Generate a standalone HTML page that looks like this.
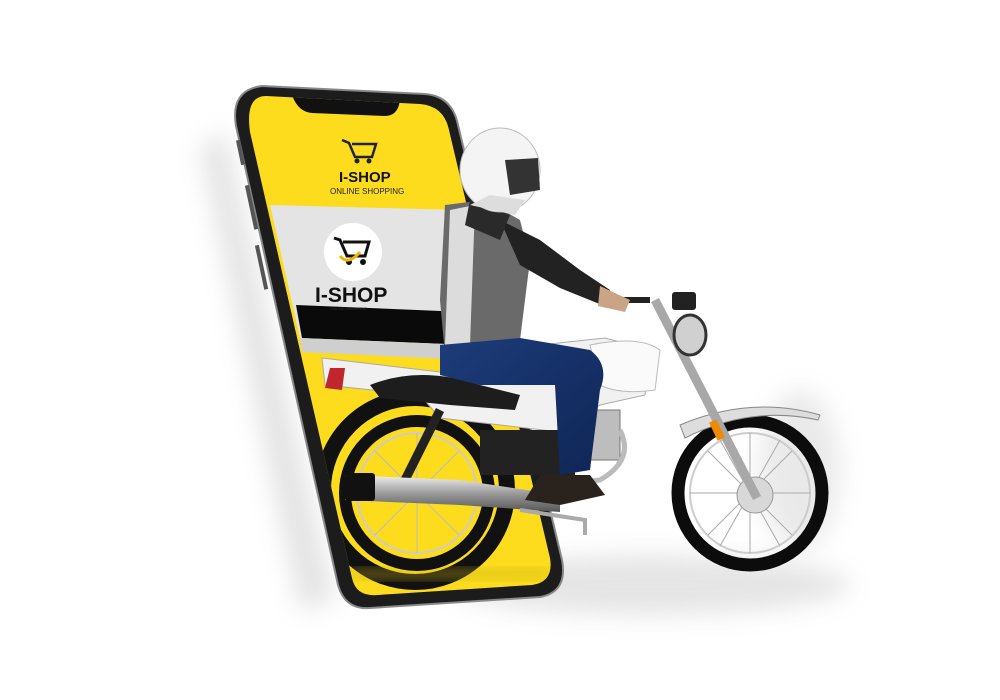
<!DOCTYPE html>
<html><head><meta charset="utf-8"><style>
html,body{margin:0;padding:0;background:#fff;width:1000px;height:700px;overflow:hidden}
svg{display:block}
text{font-family:"Liberation Sans",Arial,sans-serif}
</style></head><body>
<svg width="1000" height="700" viewBox="0 0 1000 700" xmlns="http://www.w3.org/2000/svg">
<defs>
<filter id="blur" x="-50%" y="-50%" width="200%" height="200%"><feGaussianBlur stdDeviation="12"/></filter>
<filter id="blur2" x="-50%" y="-50%" width="200%" height="200%"><feGaussianBlur stdDeviation="6"/></filter>
<linearGradient id="jeans" x1="0" y1="0" x2="1" y2="1"><stop offset="0" stop-color="#1d3c7a"/><stop offset="1" stop-color="#0f2656"/></linearGradient>
<linearGradient id="chrome" x1="0" y1="0" x2="0" y2="1"><stop offset="0" stop-color="#f2f2f2"/><stop offset=".5" stop-color="#9a9a9a"/><stop offset="1" stop-color="#555"/></linearGradient>
</defs>
<!-- shadows -->
<path d="M225 130 L335 600 L300 610 L200 150Z" fill="#bbb" opacity=".4" filter="url(#blur)"/>
<ellipse cx="650" cy="585" rx="200" ry="30" fill="#aaa" opacity=".3" filter="url(#blur)"/>
<ellipse cx="800" cy="470" rx="40" ry="80" fill="#aaa" opacity=".25" filter="url(#blur)"/>
<!-- phone body -->
<path d="M262 86 L425 94 Q452 96 458 125 L562 560 Q568 592 540 597 L370 608 Q345 610 338 585 L236 126 Q230 90 262 86 Z" fill="#1c1c1c" stroke="#888" stroke-width="2"/>
<rect x="238" y="140" width="4" height="25" fill="#555" transform="rotate(-12 240 150)"/>
<rect x="248" y="185" width="4" height="45" fill="#555" transform="rotate(-12 250 200)"/>
<rect x="258" y="245" width="4" height="45" fill="#555" transform="rotate(-12 260 260)"/>
<clipPath id="scr"><path d="M266 96 L420 104 Q444 106 449 130 L550 558 Q554 582 532 585 L378 595 Q356 597 352 578 L250 132 Q245 96 266 96 Z"/></clipPath>
<g clip-path="url(#scr)">
<rect x="230" y="90" width="340" height="520" fill="#fcdc1c"/>
<path d="M292 95 L400 100 Q398 116 385 116 L312 113 Q298 112 292 95Z" fill="#111"/>
<polygon points="270,205 460,210 470,345 300,338" fill="#e4e4e4"/>
<polygon points="296,305 465,312 470,345 302,338" fill="#0a0a0a"/>
<polygon points="300,338 470,345 470,360 302,352" fill="#cfcfcf"/>
<circle cx="353" cy="252" r="29" fill="#fff"/>
<path d="M334 238 l6 2 l7 16 h18 l4 -14 h-26" fill="none" stroke="#111" stroke-width="3"/>
<circle cx="349" cy="262" r="3" fill="#111"/><circle cx="363" cy="262" r="3" fill="#111"/>
<path d="M340 256 q8 10 20 -4" fill="none" stroke="#f0b400" stroke-width="3"/>
<text x="315" y="302" font-size="21" font-weight="bold" fill="#111">I-SHOP</text>
<text x="330" y="310" font-size="4" fill="#333">ONLINE SHOPPING</text>
<path d="M342 140 l7 3 l6 14 h17 l4 -13 h-24" fill="none" stroke="#222" stroke-width="2.5"/>
<circle cx="357" cy="161" r="2.5" fill="#222"/><circle cx="369" cy="161" r="2.5" fill="#222"/>
<text x="339" y="182" font-size="15" font-weight="bold" fill="#111">I-SHOP</text>
<text x="330" y="194" font-size="8" fill="#222">ONLINE SHOPPING</text>
<circle cx="415" cy="490" r="92" fill="none" stroke="#111" stroke-width="16"/>
<rect x="350" y="570" width="200" height="8" fill="#c9b012" opacity=".6" filter="url(#blur2)"/>
</g>
<!-- rear wheel -->
<circle cx="417" cy="493" r="72" fill="none" stroke="#111" stroke-width="12"/>
<circle cx="417" cy="493" r="60" fill="none" stroke="#ccc" stroke-width="2"/>
<g stroke="#bbb" stroke-width="1">
<line x1="417" y1="433" x2="417" y2="553"/><line x1="357" y1="493" x2="477" y2="493"/>
<line x1="375" y1="451" x2="459" y2="535"/><line x1="459" y1="451" x2="375" y2="535"/>
</g>
<!-- front wheel -->
<circle cx="750" cy="493" r="72" fill="none" stroke="#0c0c0c" stroke-width="13"/>
<circle cx="750" cy="493" r="60" fill="none" stroke="#ccc" stroke-width="2"/>
<g stroke="#aaa" stroke-width="1">
<line x1="750" y1="433" x2="750" y2="553"/><line x1="690" y1="493" x2="810" y2="493"/>
<line x1="708" y1="451" x2="792" y2="535"/><line x1="792" y1="451" x2="708" y2="535"/>
<line x1="720" y1="440" x2="780" y2="546"/><line x1="780" y1="440" x2="720" y2="546"/>
</g>
<circle cx="755" cy="495" r="18" fill="#d8d8d8" stroke="#999"/>
<path d="M680 425 Q750 395 820 415 L818 420 Q750 405 685 438 Z" fill="#ddd" stroke="#888"/>
<line x1="655" y1="300" x2="757" y2="498" stroke="#a8a8a8" stroke-width="9"/>
<rect x="713" y="420" width="8" height="20" fill="#f08a00" transform="rotate(-25 717 430)"/>
<ellipse cx="690" cy="335" rx="16" ry="20" fill="#d0d0d0" stroke="#333" stroke-width="3"/>
<rect x="672" y="292" width="24" height="18" fill="#222" rx="3"/>
<path d="M600 300 L650 300" stroke="#222" stroke-width="6"/>
<!-- frame / body -->
<path d="M322 358 L440 372 L470 368 L540 345 L605 338 L650 350 L645 395 L600 405 L560 432 L440 418 L420 395 L325 385 Z" fill="#f1f1f1" stroke="#aaa"/>
<path d="M590 345 Q640 335 660 350 L655 390 Q620 395 600 385 Z" fill="#fafafa" stroke="#bbb"/>
<path d="M330 368 L345 368 L342 390 L325 388Z" fill="#c0272d"/>
<path d="M370 385 Q420 365 480 385 L520 395 L515 410 L450 405 L380 398Z" fill="#1d1d1d"/>
<rect x="575" y="410" width="45" height="50" fill="#bdbdbd" stroke="#777"/>
<rect x="480" y="430" width="95" height="45" fill="#222"/>
<line x1="440" y1="410" x2="405" y2="480" stroke="#222" stroke-width="9"/>
<path d="M345 475 L460 480 L560 495 L560 512 L460 505 L345 500 Z" fill="url(#chrome)"/>
<rect x="345" y="473" width="30" height="28" fill="#111" rx="3"/>
<path d="M520 510 L585 520 L585 535" fill="none" stroke="#aaa" stroke-width="4"/>
<path d="M620 430 Q635 460 600 480 L560 485" fill="none" stroke="#bbb" stroke-width="5"/>
<!-- torso -->
<path d="M445 205 L485 200 L520 220 L530 260 L520 340 L470 360 L445 355 L440 300Z" fill="#6a6a6a"/>
<path d="M450 210 L475 205 L470 345 L445 345Z" fill="#dcdcdc"/>
<path d="M500 220 L540 240 L580 270 L610 290 L602 305 L560 288 L520 265Z" fill="#222"/>
<path d="M470 200 L510 215 L500 240 L465 225Z" fill="#2a2a2a"/>
<path d="M600 286 L630 300 L625 312 L598 306Z" fill="#caa585"/>
<path d="M440 345 L520 338 L590 350 Q610 365 600 390 L590 470 L560 475 L555 385 L480 385 L440 375Z" fill="url(#jeans)"/>
<path d="M540 475 L590 475 L605 495 L560 505 L525 500Z" fill="#2a221d"/>
<ellipse cx="500" cy="170" rx="40" ry="42" fill="#f4f4f4" stroke="#bbb"/>
<path d="M505 160 L538 158 L540 190 L510 195Z" fill="#333"/>
<path d="M470 205 L515 215 L525 200 L490 195Z" fill="#ddd"/>
</svg>
</body></html>
